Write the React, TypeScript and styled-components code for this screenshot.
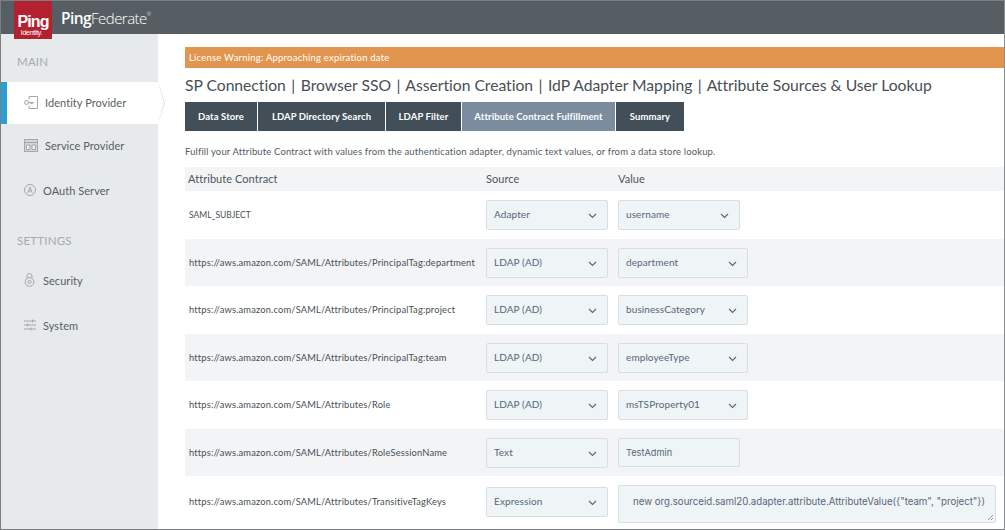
import React from "react";
import styled, { createGlobalStyle } from "styled-components";

const Global = createGlobalStyle`
  html, body { margin: 0; padding: 0; background: #fff; }
  body { font-family: Lato, "Open Sans", "Liberation Sans", sans-serif; }
  * { box-sizing: border-box; }
`;

const Frame = styled.div`
  width: 1005px; height: 530px; border: 1px solid #7c7f82; border-right-color: #8a8d90;
  display: flex; flex-direction: column; overflow: hidden; position: relative; background: #fff;
`;
const Header = styled.header`
  height: 33px; flex: none; background: #575e63; display: flex; align-items: flex-start; padding-left: 13px;
  position: relative; z-index: 3;
`;
const Logo = styled.div`
  width: 38px; height: 38px; background: #b3202f; color: #fff; display: flex; flex-direction: column; align-items: center;
  font-family: "Liberation Sans", sans-serif; flex: none;
`;
const LogoMain = styled.span`font-weight: 700; font-size: 16px; line-height: 17px; margin-top: 12px; letter-spacing: -.9px;`;
const LogoSub = styled.span`font-size: 7px; line-height: 6px; letter-spacing: -.3px; margin-left: -3px;`;
const Brand = styled.div`
  margin-left: 9px; margin-top: 8px; color: #fff; font-size: 15px; line-height: 18px; font-family: "Open Sans", sans-serif; letter-spacing: -.55px; font-weight: 300;
  b { font-weight: 600; font-size: 15.5px; }
  sup { font-size: 5px; vertical-align: 8px; line-height: 0; }
`;
const Body = styled.div`flex: 1; display: flex; min-height: 0;`;
const Side = styled.aside`
  width: 157px; flex: none; background: #e6eaeb; display: flex; flex-direction: column; padding-top: 20px;
`;
const SideHead = styled.div<{ $mt?: number }>`
  font-size: 11.5px; line-height: 16px; color: #a5abaf; padding-left: 16px; margin-top: ${p => p.$mt ?? 0}px; letter-spacing: .2px; flex: none;
`;
const NavItem = styled.div<{ $active?: boolean; $mt: number; $gap: number }>`
  height: 42px; flex: none; margin-top: ${p => p.$mt}px; display: flex; align-items: center; gap: ${p => p.$gap}px; position: relative;
  padding: 0 0 2px ${p => (p.$active ? 17 : 23)}px; font-size: 11px; color: #575e63; letter-spacing: .05px;
  ${p => p.$active ? `
    background: #fff; width: 157px; border-left: 6px solid #2a9fd6;
    &::before { content: ""; position: absolute; left: 100%; top: 0; width: 0; height: 0;
      border-top: 21px solid transparent; border-bottom: 21px solid transparent; border-left: 7px solid #d9dcde; }
    &::after { content: ""; position: absolute; left: 100%; top: 0; width: 0; height: 0;
      border-top: 21px solid transparent; border-bottom: 21px solid transparent; border-left: 6px solid #fff; }
  ` : ""}
`;
const Icon = styled.svg`flex: none; fill: none; stroke: #a2a8ac; stroke-width: 1;`;
const Main = styled.main`flex: 1; min-width: 0; padding: 13px 0 0 27px; display: flex; flex-direction: column;`;
const Warning = styled.div`
  height: 21px; flex: none; background: #e2954f; color: #fff; font-size: 9.5px; font-weight: 400; line-height: 21px; padding-left: 4px; letter-spacing: .22px;
`;
const Crumbs = styled.h1`
  margin: 7px 0 0; flex: none; font-weight: 400; font-size: 15.7px; line-height: 20px; color: #474f54; white-space: nowrap; letter-spacing: -.02px;
`;
const Sep = styled.span`margin: 0 1.5px;`;
const Tabs = styled.div`display: flex; flex: none; gap: 1px; margin-top: 7px; height: 29px;`;
const Tab = styled.div<{ $on?: boolean; $w: number }>`
  width: ${p => p.$w}px; background: ${p => (p.$on ? "#7b8c9e" : "#424f58")}; color: #fff; font-size: 9.5px; font-weight: 700;
  display: flex; align-items: center; justify-content: center; letter-spacing: .1px;
`;
const Intro = styled.p`margin: 15px 0 0; flex: none; font-size: 9.5px; line-height: 12px; color: #535b60; letter-spacing: .14px; white-space: nowrap;`;
const HeadRow = styled.div`
  display: grid; flex: none; grid-template-columns: 298px 132px 1fr; height: 24px; margin-top: 9px; background: #f2f4f6; align-items: center;
  font-size: 11px; color: #4e565b; padding: 0 0 2px 3px; letter-spacing: .05px;
`;
const Row = styled.div<{ $alt: boolean; $h?: number; $pad?: number }>`
  display: grid; grid-template-columns: 297px 132px 1fr; align-items: flex-start; height: ${p => p.$h ?? 47.5}px; flex: none;
  background: ${p => (p.$alt ? "#f2f4f6" : "#fff")}; padding-left: 4px; padding-top: ${p => p.$pad ?? 9}px;
`;
const Name = styled.div<{ $caps?: boolean }>`
  font-size: ${p => (p.$caps ? 8.5 : 9.3)}px; line-height: 30px; color: #474f54; white-space: nowrap; letter-spacing: ${p => (p.$caps ? 0 : 0.18)}px;
`;
const Select = styled.div<{ $w: number }>`
  width: ${p => p.$w}px; height: 30px; background: #eff4f7; border: 1px solid #d8dee2; border-radius: 2px; display: flex; align-items: center; justify-content: space-between;
  padding: 0 10px 2px 7px; font-size: 10px; color: #56677a; letter-spacing: .1px;
`;
const Caret = styled.svg`margin-top: 4px; flex: none; fill: none; stroke: #56677a; stroke-width: 1.1;`;
const Input = styled.div`
  width: 122px; height: 29px; background: #eff4f7; border: 1px solid #d8dee2; border-radius: 2px; display: flex; align-items: center; padding: 1px 0 0 7px; font-size: 9.2px; color: #56677a; font-family: Inter, sans-serif;
`;
const Area = styled.div`
  width: 378px; height: 38px; margin-top: -2px; background: #eff4f7; border: 1px solid #d8dee2; border-radius: 2px; padding: 9px 0 0 14px; font-family: Inter, sans-serif; font-size: 9.67px; line-height: 13px; color: #56677a; white-space: nowrap; position: relative;
`;
const Grip = styled.svg`position: absolute; right: 1px; bottom: 1px; stroke: #9aa0a4; fill: none;`;

const Chevron = () => (
  <Caret width="9" height="6" viewBox="0 0 9 6"><path d="M1 1l3.5 3.5L8 1" /></Caret>
);

const rows = [
  ["SAML_SUBJECT", "Adapter", "username", 122],
  ["https://aws.amazon.com/SAML/Attributes/PrincipalTag:department", "LDAP (AD)", "department", 130],
  ["https://aws.amazon.com/SAML/Attributes/PrincipalTag:project", "LDAP (AD)", "businessCategory", 130],
  ["https://aws.amazon.com/SAML/Attributes/PrincipalTag:team", "LDAP (AD)", "employeeType", 130],
  ["https://aws.amazon.com/SAML/Attributes/Role", "LDAP (AD)", "msTSProperty01", 130],
] as const;

export default function App() {
  return (
    <Frame>
      <Global />
      <Header>
        <Logo><LogoMain>Ping</LogoMain><LogoSub>Identity.</LogoSub></Logo>
        <Brand><b>Ping</b>Federate<sup>®</sup></Brand>
      </Header>
      <Body>
        <Side>
          <SideHead>MAIN</SideHead>
          <NavItem $active $mt={12} $gap={7}>
            <Icon width="14" height="13" viewBox="0 0 14 13"><path d="M5 3.5V.5h8.5v12H5V9.5" /><circle cx="2.5" cy="6.5" r="2" /><path d="M4.5 6.5h5l-1 1.2H6" /></Icon>
            Identity Provider
          </NavItem>
          <NavItem $mt={1} $gap={7}>
            <Icon width="14" height="13" viewBox="0 0 14 13"><rect x=".5" y=".5" width="13" height="12" fill="#d2d6d8" /><path d="M.5 3.5h13" /><path d="M2.5 6h3.5v4.5H2.5zM8 6h3.5v4.5H8z" fill="#eef0f1" /></Icon>
            Service Provider
          </NavItem>
          <NavItem $mt={3} $gap={7}>
            <Icon width="12" height="12" viewBox="0 0 12 12"><circle cx="6" cy="6" r="5.5" /><path d="M3.8 9l2.2-6 2.2 6M4.6 7h2.8" /></Icon>
            OAuth Server
          </NavItem>
          <SideHead $mt={21}>SETTINGS</SideHead>
          <NavItem $mt={11} $gap={8}>
            <Icon width="11" height="14" viewBox="0 0 11 14"><path d="M3 5V3a2.5 2.5 0 0 1 5 0v2" /><circle cx="5.5" cy="9" r="4.4" /><circle cx="5.5" cy="9" r="1.6" /></Icon>
            Security
          </NavItem>
          <NavItem $mt={3} $gap={7}>
            <Icon width="12" height="12" viewBox="0 0 12 12"><path d="M0 2h12M0 6h12M0 10h12M8.5.5v3M3.5 4.5v3M7 8.5v3" /></Icon>
            System
          </NavItem>
        </Side>
        <Main>
          <Warning>License Warning: Approaching expiration date</Warning>
          <Crumbs>SP Connection <Sep>|</Sep> Browser SSO <Sep>|</Sep> Assertion Creation <Sep>|</Sep> IdP Adapter Mapping <Sep>|</Sep> Attribute Sources &amp; User Lookup</Crumbs>
          <Tabs>
            <Tab $w={72}>Data Store</Tab>
            <Tab $w={127}>LDAP Directory Search</Tab>
            <Tab $w={75}>LDAP Filter</Tab>
            <Tab $w={153} $on>Attribute Contract Fulfillment</Tab>
            <Tab $w={68}>Summary</Tab>
          </Tabs>
          <Intro>Fulfill your Attribute Contract with values from the authentication adapter, dynamic text values, or from a data store lookup.</Intro>
          <HeadRow><span>Attribute Contract</span><span>Source</span><span>Value</span></HeadRow>
          {rows.map((r, i) => (
            <Row key={r[0]} $alt={i % 2 === 1}>
              <Name $caps={i === 0}>{r[0]}</Name>
              <Select $w={122}>{r[1]}<Chevron /></Select>
              <Select $w={r[3]}>{r[2]}<Chevron /></Select>
            </Row>
          ))}
          <Row $alt>
            <Name>https://aws.amazon.com/SAML/Attributes/RoleSessionName</Name>
            <Select $w={122}>Text<Chevron /></Select>
            <Input>TestAdmin</Input>
          </Row>
          <Row $alt={false} $h={60} $pad={11}>
            <Name>https://aws.amazon.com/SAML/Attributes/TransitiveTagKeys</Name>
            <Select $w={122}>Expression<Chevron /></Select>
            <Area>new org.sourceid.saml20.adapter.attribute.AttributeValue({'{"team", "project"}'})
              <Grip width="7" height="7" viewBox="0 0 7 7"><path d="M1 6l5-5M4 6l2-2" /></Grip>
            </Area>
          </Row>
        </Main>
      </Body>
    </Frame>
  );
}
